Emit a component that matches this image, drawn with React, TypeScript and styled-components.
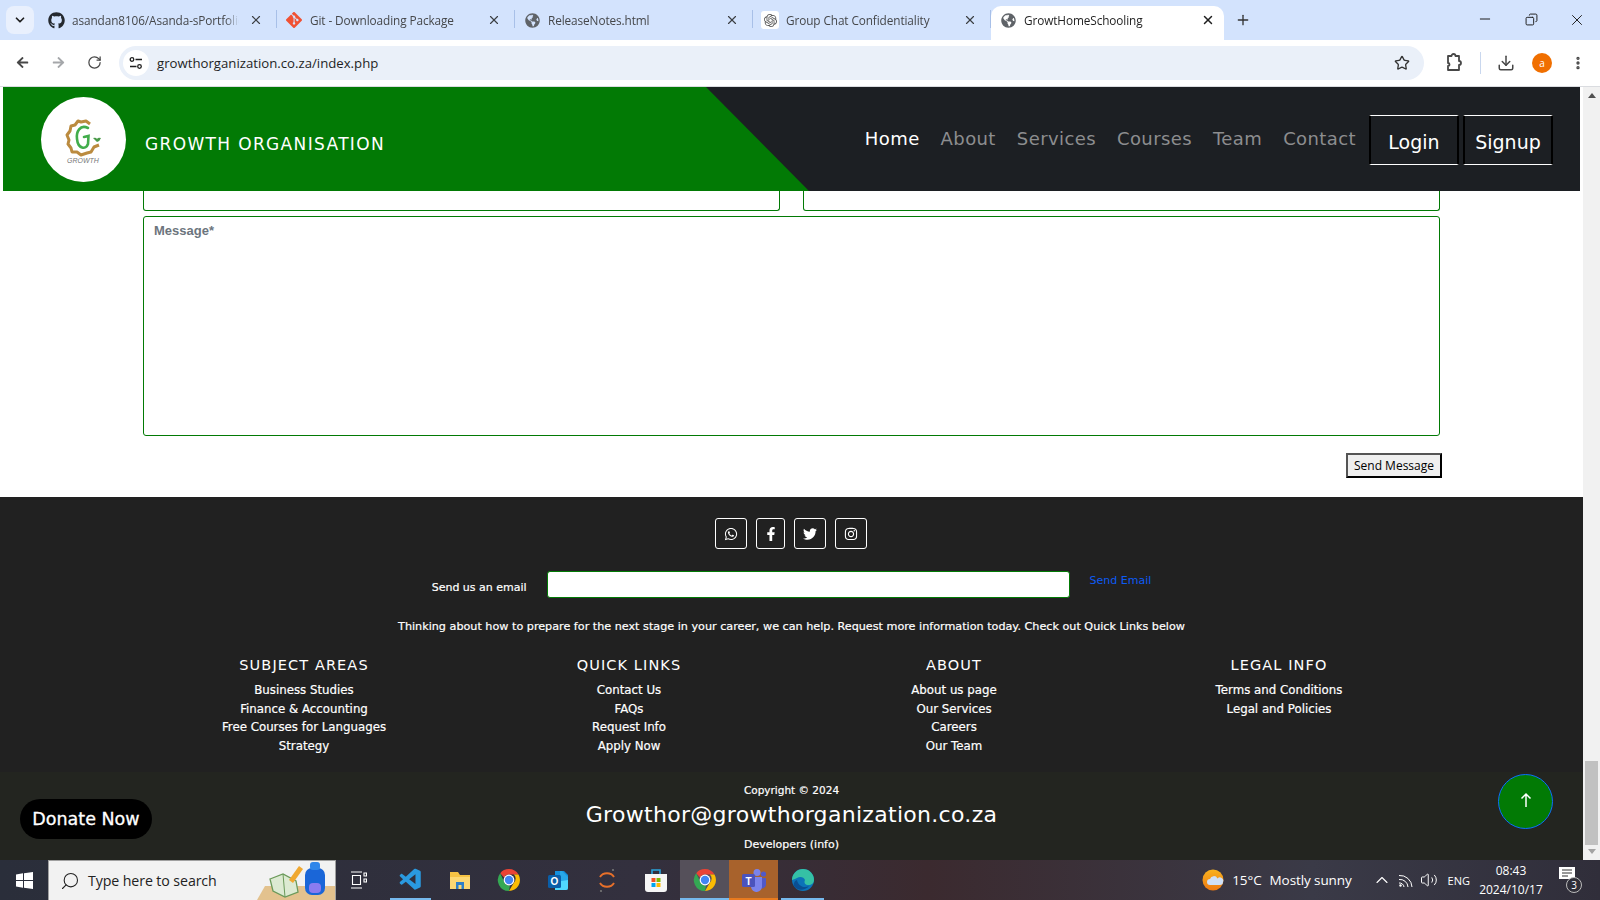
import React, { FC } from 'react';
import styled, { createGlobalStyle } from 'styled-components';
import {
  FaArrowLeft,
  FaArrowRight,
  FaFacebookF,
  FaGithub,
  FaGlobeAmericas,
  FaInstagram,
  FaTwitter,
  FaWhatsapp,
} from 'react-icons/fa';
import { SiGit, SiOpenai } from 'react-icons/si';
import { VscVscode } from 'react-icons/vsc';
import {
  Download,
  EllipsisVertical,
  Minus,
  Plus,
  RotateCw,
  Search,
  Star,
  X,
  ChevronDown,
  ChevronUp,
  Copy,
  Volume2,
} from 'lucide-react';

const siteFont = `'DejaVu Sans', sans-serif`;
const chromeFont = `'Open Sans', 'Noto Sans', sans-serif`;
const green = '#027a05';

const GlobalStyle = createGlobalStyle`
  html, body { margin: 0; padding: 0; height: 100%; overflow: hidden; background: #fff; }
  * { box-sizing: border-box; }
`;

const Screen = styled.div`
  display: flex;
  flex-direction: column;
  width: 1600px;
  height: 900px;
  overflow: hidden;
`;

/* browser chrome */
const TabStrip = styled.div`
  display: flex;
  align-items: flex-end;
  height: 40px;
  flex: none;
  padding-left: 6px;
  background: #d3e3fd;
  font-family: ${chromeFont};
`;

const TabMenu = styled.div`
  display: flex;
  align-items: center;
  justify-content: center;
  width: 28px;
  height: 28px;
  margin: 0 5px 6px 0;
  border-radius: 8px;
  background: #e9f0fd;
  color: #1f1f1f;
`;

const Tab = styled.div<{ $active?: boolean }>`
  position: relative;
  display: flex;
  align-items: center;
  width: ${({ $active }) => ($active ? 233 : 238)}px;
  height: 34px;
  padding: 0 ${({ $active }) => ($active ? 9 : 14)}px 6px 8px;
  border-radius: 10px 10px 0 0;
  background: ${({ $active }) => ($active ? '#fff' : 'transparent')};
  color: ${({ $active }) => ($active ? '#1f1f1f' : '#45474a')};
  &::after {
    content: '';
    display: ${({ $active }) => ($active ? 'none' : 'block')};
    position: absolute;
    right: 0;
    top: 4px;
    height: 18px;
    width: 1px;
    background: #a8c0e8;
  }
`;

const Favicon = styled.span<{ $tile?: boolean }>`
  display: flex;
  align-items: center;
  justify-content: center;
  flex: none;
  width: 18px;
  height: 18px;
  margin-right: 7px;
  border-radius: 3px;
  background: ${({ $tile }) => ($tile ? '#fff' : 'transparent')};
`;

const TabTitle = styled.span`
  flex: 1;
  margin-right: 10px;
  overflow: hidden;
  white-space: nowrap;
  font-size: 11.8px;
  letter-spacing: -0.1px;
  mask-image: linear-gradient(90deg, #000 92%, transparent);
`;

const TabClose = styled.span`
  display: flex;
  flex: none;
  color: #3c3f43;
`;

const NewTab = styled.div`
  display: flex;
  margin: 0 0 12px 11px;
  color: #333;
`;

const WindowButtons = styled.div`
  display: flex;
  margin-left: auto;
  align-self: flex-start;
  padding-top: 11px;
  color: #1f1f1f;
`;

const WindowButton = styled.span`
  display: flex;
  justify-content: center;
  width: 46px;
`;

const RestoreIcon = styled(Copy)`
  margin-top: 2px;
  transform: scaleX(-1);
`;

const Toolbar = styled.div`
  display: flex;
  align-items: center;
  flex: none;
  height: 47px;
  padding: 0 0 1px 13px;
  border-bottom: 1px solid #dadce0;
  border-radius: 8px 8px 0 0;
  background: #fff;
  font-family: ${chromeFont};
  color: #474747;
`;

const NavIcon = styled.span<{ $dim?: boolean }>`
  display: flex;
  justify-content: center;
  width: 18px;
  margin-right: 18px;
  color: ${({ $dim }) => ($dim ? '#a5a7aa' : '#474747')};
`;

const Omnibox = styled.div`
  display: flex;
  align-items: center;
  width: 1305px;
  height: 34px;
  margin-left: -2px;
  padding: 0 14px 0 4px;
  border-radius: 17px;
  background: #eaf0f9;
`;

const SiteInfo = styled.span`
  display: flex;
  align-items: center;
  justify-content: center;
  width: 26px;
  height: 26px;
  margin-right: 8px;
  border-radius: 50%;
  background: #fff;
  color: #1f1f1f;
`;

const Url = styled.span`
  flex: 1;
  font-size: 13.2px;
  color: #1f1f1f;
`;

const ToolActions = styled.div`
  display: flex;
  align-items: center;
  margin-left: 20px;
`;

const ToolDivider = styled.span`
  width: 1px;
  height: 22px;
  margin: 0 16px;
  background: #c9d7ee;
`;

const Avatar = styled.span`
  display: flex;
  align-items: center;
  justify-content: center;
  width: 20px;
  height: 20px;
  margin: 0 18px 0 17px;
  border-radius: 50%;
  background: #f06f00;
  color: #fff;
  font-size: 10px;
`;

/* page */
const Viewport = styled.div`
  display: flex;
  flex: 1;
  min-height: 0;
`;

const Page = styled.div`
  position: relative;
  display: flex;
  flex-direction: column;
  flex: 1;
  min-width: 0;
  background: #fff;
  font-family: ${siteFont};
`;

const Header = styled.header`
  display: flex;
  flex: none;
  height: 104px;
  margin: 0 3px;
  background: #1c1f23;
`;

const Brand = styled.div`
  display: flex;
  align-items: center;
  flex: none;
  width: 806px;
  padding-left: 38px;
  background: ${green};
  clip-path: polygon(0 0, 703px 0, 100% 100%, 0 100%);
`;

const LogoDisc = styled.div`
  display: flex;
  align-items: center;
  justify-content: center;
  width: 85px;
  height: 85px;
  padding-top: 4px;
  border-radius: 50%;
  background: #fff;
`;

const BrandName = styled.span`
  margin: 10px 0 0 19px;
  color: #fff;
  font-size: 17px;
  letter-spacing: 1.35px;
  white-space: nowrap;
`;

const Menu = styled.nav`
  display: flex;
  align-items: center;
  flex: 1;
  justify-content: flex-end;
  padding-right: 27px;
`;

const MenuLink = styled.a<{ $current?: boolean }>`
  margin: -2px 21px 0 0;
  color: ${({ $current }) => ($current ? '#fff' : '#8c8d8f')};
  font-size: 18px;
  letter-spacing: 0.4px;
`;

const AuthGroup = styled.div`
  display: flex;
  gap: 4px;
  margin: 2px 0 0 -8px;
`;

const AuthButton = styled.a`
  display: flex;
  align-items: center;
  justify-content: center;
  width: 90px;
  height: 50px;
  padding-top: 4px;
  border: solid #fff;
  border-width: 1px 0;
  border-left: 2px solid #000;
  border-right: 2px solid #000;
  color: #fff;
  font-size: 19px;
`;

const ContactForm = styled.section`
  display: flex;
  flex-direction: column;
  flex: none;
  height: 306px;
  padding: 0 143px;
`;

const InputRow = styled.div`
  display: grid;
  grid-template-columns: 637px 637px;
  justify-content: space-between;
  flex: none;
`;

const ClippedInput = styled.div`
  height: 20px;
  border: 1px solid ${green};
  border-top: none;
  border-radius: 0 0 3px 3px;
`;

const MessageBox = styled.div`
  flex: none;
  height: 220px;
  margin-top: 5px;
  padding: 6px 10px;
  border: 1px solid ${green};
  border-radius: 3px;
  color: #6c757d;
  font: bold 13px 'Liberation Sans', sans-serif;
`;

const FormActions = styled.div`
  display: flex;
  justify-content: flex-end;
  margin: 17px -2px 0 0;
`;

const SendButton = styled.button`
  width: 96px;
  height: 25px;
  padding: 0;
  border: 2px solid;
  border-color: #555 #000 #000 #555;
  background: #efefef;
  color: #000;
  font: 12px ${chromeFont};
`;

const Footer = styled.footer`
  display: flex;
  flex-direction: column;
  flex: 1;
  min-height: 0;
  background: #212121;
  color: #fff;
  -webkit-text-stroke: 0.2px #fff;
`;

const FooterMain = styled.div`
  display: flex;
  flex-direction: column;
  align-items: center;
  flex: none;
  height: 275px;
  padding-top: 21px;
`;

const Socials = styled.div`
  display: flex;
  gap: 9px;
  margin-right: 1px;
`;

const SocialLink = styled.a<{ $wide?: boolean }>`
  display: flex;
  align-items: center;
  justify-content: center;
  width: ${({ $wide }) => ($wide ? 32 : 29)}px;
  height: 31px;
  border: 1px solid #fff;
  border-radius: 3px;
  color: #fff;
  font-size: 14px;
`;

const EmailRow = styled.div`
  display: flex;
  align-items: flex-start;
  height: 27px;
  margin-top: 22px;
  font-size: 11px;
`;

const EmailLabel = styled.label`
  margin: 10px 20px 0 0;
`;

const EmailInput = styled.div`
  width: 523px;
  height: 27px;
  border: 1px solid ${green};
  border-radius: 3px;
  background: #fff;
`;

const SendEmail = styled.a`
  margin: 3px 0 0 20px;
  color: #0d5bf5;
  -webkit-text-stroke: 0;
`;

const Blurb = styled.p`
  margin: 22px 0 0;
  font-size: 11.2px;
  white-space: nowrap;
`;

const LinkGrid = styled.div`
  display: grid;
  grid-template-columns: repeat(4, 325px);
  margin: 24px 0 0;
  text-align: center;
`;

const LinkColumn = styled.div`
  display: flex;
  flex-direction: column;
  align-items: center;
`;

const ColumnTitle = styled.h5`
  margin: 0 0 8px;
  font-size: 14.5px;
  font-weight: normal;
  letter-spacing: 1.1px;
  line-height: 16px;
  -webkit-text-stroke: 0;
`;

const ColumnLink = styled.a`
  font-size: 11.8px;
  line-height: 18.7px;
  white-space: nowrap;
`;

const FooterBottom = styled.div`
  display: flex;
  flex-direction: column;
  align-items: center;
  flex: 1;
  padding-top: 11px;
  background: #232520;
`;

const Copyright = styled.span`
  font-size: 10.5px;
  line-height: 14px;
`;

const ContactMail = styled.span`
  margin-top: 4px;
  font-size: 22px;
  line-height: 27px;
  letter-spacing: 0.3px;
  -webkit-text-stroke: 0;
`;

const Developers = styled.span`
  margin-top: 10px;
  font-size: 11px;
  line-height: 14px;
`;

const DonateButton = styled.a`
  position: absolute;
  left: 20px;
  bottom: 21px;
  display: flex;
  align-items: center;
  justify-content: center;
  width: 132px;
  height: 40px;
  border-radius: 20px;
  background: #000;
  color: #fff;
  font-size: 17.5px;
  -webkit-text-stroke: 0.3px #fff;
`;

const UpButton = styled.a`
  position: absolute;
  right: 30px;
  bottom: 31px;
  display: flex;
  align-items: center;
  justify-content: center;
  width: 55px;
  height: 55px;
  padding-bottom: 3px;
  border: 1px solid #0d6efd;
  border-radius: 50%;
  background: ${green};
  color: #fff;
`;

const Scrollbar = styled.div`
  display: flex;
  flex-direction: column;
  align-items: center;
  flex: none;
  width: 17px;
  padding: 6px 0;
  background: #f1f1f1;
`;

const ScrollThumb = styled.div`
  width: 13px;
  height: 84px;
  margin-top: auto;
  margin-bottom: 4px;
  background: #c1c1c1;
`;

const ScrollArrow = styled.span<{ $down?: boolean }>`
  width: 0;
  height: 0;
  border-left: 4px solid transparent;
  border-right: 4px solid transparent;
  ${({ $down }) =>
    $down ? 'border-top: 5px solid #a3a3a3;' : 'border-bottom: 5px solid #505050;'}
`;

/* windows taskbar */
const Taskbar = styled.div`
  display: flex;
  align-items: center;
  flex: none;
  height: 40px;
  background: linear-gradient(90deg, #2a2e3a 0%, #33303e 40%, #3b2a2f 58%, #3a3a47 82%, #302e3a 100%);
  color: #fff;
  font-family: ${chromeFont};
`;

const StartButton = styled.div`
  display: flex;
  align-items: center;
  justify-content: center;
  width: 48px;
  height: 40px;
`;

const SearchBox = styled.div`
  position: relative;
  display: flex;
  align-items: center;
  width: 288px;
  height: 40px;
  padding-left: 11px;
  overflow: hidden;
  border: 1px solid #a0a0a0;
  border-bottom: none;
  background: #f2f2f2;
  color: #222;
  font-size: 14.2px;
`;

const SearchGlass = styled(Search)`
  transform: scaleX(-1);
`;

const SearchText = styled.span`
  margin-left: 8px;
  letter-spacing: -0.1px;
`;

const SearchArt = styled.svg`
  position: absolute;
  right: 0;
  bottom: 0;
`;

const TaskView = styled.div`
  display: flex;
  align-items: center;
  justify-content: center;
  width: 50px;
  padding-right: 4px;
`;

const TaskIcon = styled.div<{ $bg?: string; $line?: string; $inset?: number }>`
  position: relative;
  display: flex;
  align-items: center;
  justify-content: center;
  width: 49px;
  height: 40px;
  background: ${({ $bg }) => $bg || 'transparent'};
  &::after {
    content: '';
    position: absolute;
    left: ${({ $inset }) => $inset || 0}px;
    right: ${({ $inset }) => $inset || 0}px;
    bottom: 0;
    height: 2px;
    background: ${({ $line }) => $line || 'transparent'};
  }
`;

const Tray = styled.div`
  display: flex;
  align-items: center;
  margin-left: auto;
  height: 40px;
  font-size: 13.5px;
`;

const Weather = styled.span`
  display: flex;
  align-items: center;
  margin-right: 20px;
`;

const WeatherText = styled.span`
  margin-left: 8px;
  letter-spacing: -0.1px;
`;

const TrayIcon = styled.span`
  display: flex;
  margin-right: 6px;
`;

const Lang = styled.span`
  margin: 0 8px 0 4px;
  font-size: 11px;
`;

const Clock = styled.div`
  display: flex;
  flex-direction: column;
  align-items: center;
  width: 66px;
  margin-right: 15px;
  font-size: 12px;
  line-height: 19px;
`;

const Notify = styled.span`
  position: relative;
  display: flex;
  width: 23px;
  height: 26px;
  margin-right: 18px;
`;

const NotifyBadge = styled.span`
  position: absolute;
  left: 7px;
  top: 10px;
  width: 16px;
  height: 16px;
  border: 1px solid #bbb;
  border-radius: 50%;
  background: #2f2e38;
  font-size: 10px;
  line-height: 14px;
  text-align: center;
`;

const GrowthLogo: FC = () => (
  <svg width="38" height="46" viewBox="0 0 38 46">
    <path
      d="M25 6 L21 3 L16 4 L13 3 L10 7 L6 8 L5 13 L2 17 L4 22 L3 26 L6 30 L7 34 L12 34 L16 37 L22 35 L26 34 L29 29 L34 27"
      fill="none"
      stroke="#bb8b3f"
      strokeWidth="3"
      strokeLinejoin="round"
    />
    <path
      d="M23 10 C15 6 11 14 12 21 C13 31 21 32 23 26 L23.500 18 L19 19"
      fill="none"
      stroke="#42ad4b"
      strokeWidth="2.6"
      strokeLinecap="round"
    />
    <path d="M32 24 q-3 -3 -4 -4 q3 -1 4 1 q1 -2 4 -1 q-1 3 -4 4" fill="#4a9a4a" />
    <text x="18" y="45" textAnchor="middle" fontSize="7" fontStyle="italic" fill="#777" fontFamily="Liberation Sans, sans-serif">
      GROWTH
    </text>
  </svg>
);

const SiteInfoIcon: FC = () => (
  <svg width="14" height="14" viewBox="0 0 14 14" fill="none" stroke="currentColor" strokeWidth="1.3">
    <circle cx="3" cy="3.500" r="1.800" />
    <path d="M6.500 3.500H13M1 10.500h6.500" />
    <circle cx="10.500" cy="10.500" r="1.800" />
  </svg>
);

const ExtensionIcon: FC = () => (
  <svg width="20" height="20" viewBox="0 0 20 20" fill="none" stroke="currentColor" strokeWidth="1.8" strokeLinejoin="round">
    <path d="M4 3h3.500a2 2 0 0 1 4 0H15v5a2 2 0 0 1 0 4v5H4v-4a1.500 1.500 0 0 0 0-3V3z" />
  </svg>
);

const WifiIcon: FC = () => (
  <svg width="16" height="16" viewBox="0 0 16 16" fill="none" stroke="#fff" strokeWidth="1">
    <path d="M1 7.500A8 8 0 0 1 10 15M1 3.500A12 12 0 0 1 14 15M1 11a4.500 4.500 0 0 1 5 4" />
    <circle cx="2.500" cy="13.500" r="1.200" fill="#fff" stroke="none" />
  </svg>
);

const ChromeMark: FC = () => (
  <svg width="24" height="24" viewBox="0 0 24 24">
    <path d="M12 1a11 11 0 0 1 9.500 5.500H12A5.500 5.500 0 0 0 7 9.500L3.200 5.200A11 11 0 0 1 12 1z" fill="#ea4335" />
    <path d="M21.500 6.500A11 11 0 0 1 12 23l4.800-8.300a5.500 5.500 0 0 0 0-8.200z" fill="#fbbc04" />
    <path d="M12 23A11 11 0 0 1 3.200 5.200L7.600 14.700a5.500 5.500 0 0 0 5.400 2.800z" fill="#34a853" />
    <circle cx="12" cy="12" r="5.400" fill="#fff" />
    <circle cx="12" cy="12" r="4.200" fill="#4285f4" />
  </svg>
);

const Explorer: FC = () => (
  <svg width="24" height="24" viewBox="0 0 24 24">
    <path d="M2 4h8l2 3h10v14H2z" fill="#f5c244" />
    <path d="M2 9h20v12H2z" fill="#fcd873" />
    <rect x="8" y="14" width="8" height="7" fill="#2f80c8" />
    <rect x="10.500" y="17" width="3" height="4" fill="#fcd873" />
  </svg>
);

const Outlook: FC = () => (
  <svg width="24" height="24" viewBox="0 0 24 24">
    <path d="M9 3h9l4 4v13a2 2 0 0 1-2 2H9z" fill="#1490df" />
    <path d="M16 3l6 6v5h-8V3z" fill="#28a8ea" />
    <path d="M9 14l13-2v8a2 2 0 0 1-2 2H9z" fill="#50d9ff" />
    <rect x="2" y="7" width="13" height="13" rx="1.500" fill="#0a5ea8" />
    <text x="8.500" y="17" textAnchor="middle" fontSize="10" fontWeight="bold" fill="#fff" fontFamily="Liberation Sans, sans-serif">
      O
    </text>
  </svg>
);

const Jupyter: FC = () => (
  <svg width="22" height="26" viewBox="0 0 22 26">
    <path d="M4 10c3-5 11-5 14 0" fill="none" stroke="#e8702a" strokeWidth="2" />
    <path d="M4 16c3 5 11 5 14 0" fill="none" stroke="#e8702a" strokeWidth="2" />
    <circle cx="17" cy="3" r="1.100" fill="#777" />
    <circle cx="5" cy="24" r="1.100" fill="#777" />
  </svg>
);

const Store: FC = () => (
  <svg width="24" height="26" viewBox="0 0 24 26">
    <path d="M8 7V3h8v4" fill="none" stroke="#2aa4dc" strokeWidth="1.600" />
    <path d="M1 7h22v15a3 3 0 0 1-3 3H4a3 3 0 0 1-3-3z" fill="#f6f6f6" />
    <rect x="7.500" y="11" width="4" height="4" fill="#f25022" />
    <rect x="12.500" y="11" width="4" height="4" fill="#7fba00" />
    <rect x="7.500" y="16" width="4" height="4" fill="#00a4ef" />
    <rect x="12.500" y="16" width="4" height="4" fill="#ffb900" />
  </svg>
);

const Teams: FC = () => (
  <svg width="26" height="24" viewBox="0 0 26 24">
    <circle cx="16" cy="4.500" r="3.500" fill="#7b83eb" />
    <circle cx="22.500" cy="6" r="2.600" fill="#5059c9" />
    <path d="M18 10h7v7a4 4 0 0 1-7 2z" fill="#5059c9" />
    <path d="M9 9h12v9a5.500 5.500 0 0 1-11 1z" fill="#7b83eb" />
    <rect x="1" y="6" width="13" height="13" rx="1.500" fill="#4b53bc" />
    <text x="7.500" y="16.500" textAnchor="middle" fontSize="10" fontWeight="bold" fill="#fff" fontFamily="Liberation Sans, sans-serif">
      T
    </text>
  </svg>
);

const Edge: FC = () => (
  <svg width="24" height="24" viewBox="0 0 24 24">
    <circle cx="12" cy="12" r="11" fill="#0c73b8" />
    <path d="M1 12A11 11 0 0 1 23 12c0 3-2.500 5-5.500 5S12.500 15 14 12c-1-3-5-4-8-2-3 1.500-5 2-5 2z" fill="#35c1a5" />
    <path d="M6 12c1 5 6 9 12 6-4 5-12 5-15 0-1-2 1-6 3-6z" fill="#0a4f93" />
  </svg>
);

const WeatherIcon: FC = () => (
  <svg width="22" height="24" viewBox="0 0 22 24">
    <defs>
      <linearGradient id="sun" x1="0" y1="0" x2="0" y2="1">
        <stop offset="0" stopColor="#f9b21e" />
        <stop offset="1" stopColor="#ee7a12" />
      </linearGradient>
    </defs>
    <circle cx="11" cy="12" r="10.500" fill="url(#sun)" />
    <path d="M8 17a3 3 0 0 1 0-6 4 4 0 0 1 7.500-.5A3.300 3.300 0 0 1 21 14a3 3 0 0 1-3 3z" fill="#cfe0f7" />
  </svg>
);

const Tabs = [
  { title: 'asandan8106/Asanda-sPortfolio', icon: <FaGithub size={17} color="#24292f" /> },
  { title: 'Git - Downloading Package', icon: <SiGit size={16} color="#f05133" /> },
  { title: 'ReleaseNotes.html', icon: <FaGlobeAmericas size={15} color="#5f6368" /> },
  { title: 'Group Chat Confidentiality', icon: <SiOpenai size={13} color="#555" />, tile: true },
];

const Columns = [
  { title: 'SUBJECT AREAS', links: ['Business Studies', 'Finance & Accounting', 'Free Courses for Languages', 'Strategy'] },
  { title: 'QUICK LINKS', links: ['Contact Us', 'FAQs', 'Request Info', 'Apply Now'] },
  { title: 'ABOUT', links: ['About us page', 'Our Services', 'Careers', 'Our Team'] },
  { title: 'LEGAL INFO', links: ['Terms and Conditions', 'Legal and Policies'] },
];

const App: FC = () => {
  return (
    <Screen>
      <GlobalStyle />
      <TabStrip>
        <TabMenu>
          <ChevronDown size={14} strokeWidth={3} />
        </TabMenu>
        {Tabs.map((tab) => (
          <Tab key={tab.title}>
            <Favicon $tile={tab.tile}>{tab.icon}</Favicon>
            <TabTitle>{tab.title}</TabTitle>
            <TabClose>
              <X size={14} strokeWidth={2} />
            </TabClose>
          </Tab>
        ))}
        <Tab $active>
          <Favicon>
            <FaGlobeAmericas size={15} color="#5f6368" />
          </Favicon>
          <TabTitle>GrowtHomeSchooling</TabTitle>
          <TabClose>
            <X size={14} strokeWidth={2.5} color="#1f1f1f" />
          </TabClose>
        </Tab>
        <NewTab>
          <Plus size={16} strokeWidth={2} />
        </NewTab>
        <WindowButtons>
          <WindowButton>
            <Minus size={16} strokeWidth={1.5} />
          </WindowButton>
          <WindowButton>
            <RestoreIcon size={13} strokeWidth={1.8} />
          </WindowButton>
          <WindowButton>
            <X size={18} strokeWidth={1.3} />
          </WindowButton>
        </WindowButtons>
      </TabStrip>
      <Toolbar>
        <NavIcon>
          <FaArrowLeft size={13} />
        </NavIcon>
        <NavIcon $dim>
          <FaArrowRight size={13} />
        </NavIcon>
        <NavIcon>
          <RotateCw size={15} strokeWidth={2} />
        </NavIcon>
        <Omnibox>
          <SiteInfo>
            <SiteInfoIcon />
          </SiteInfo>
          <Url>growthorganization.co.za/index.php</Url>
          <Star size={16} strokeWidth={2} color="#333" />
        </Omnibox>
        <ToolActions>
          <ExtensionIcon />
          <ToolDivider />
          <Download size={18} strokeWidth={2} />
          <Avatar>a</Avatar>
          <EllipsisVertical size={16} strokeWidth={3} />
        </ToolActions>
      </Toolbar>
      <Viewport>
        <Page>
          <Header>
            <Brand>
              <LogoDisc>
                <GrowthLogo />
              </LogoDisc>
              <BrandName>GROWTH ORGANISATION</BrandName>
            </Brand>
            <Menu>
              <MenuLink $current>Home</MenuLink>
              <MenuLink>About</MenuLink>
              <MenuLink>Services</MenuLink>
              <MenuLink>Courses</MenuLink>
              <MenuLink>Team</MenuLink>
              <MenuLink>Contact</MenuLink>
              <AuthGroup>
                <AuthButton>Login</AuthButton>
                <AuthButton>Signup</AuthButton>
              </AuthGroup>
            </Menu>
          </Header>
          <ContactForm>
            <InputRow>
              <ClippedInput />
              <ClippedInput />
            </InputRow>
            <MessageBox>Message*</MessageBox>
            <FormActions>
              <SendButton>Send Message</SendButton>
            </FormActions>
          </ContactForm>
          <Footer>
            <FooterMain>
              <Socials>
                <SocialLink $wide>
                  <FaWhatsapp />
                </SocialLink>
                <SocialLink>
                  <FaFacebookF />
                </SocialLink>
                <SocialLink $wide>
                  <FaTwitter />
                </SocialLink>
                <SocialLink $wide>
                  <FaInstagram />
                </SocialLink>
              </Socials>
              <EmailRow>
                <EmailLabel>Send us an email</EmailLabel>
                <EmailInput />
                <SendEmail>Send Email</SendEmail>
              </EmailRow>
              <Blurb>
                Thinking about how to prepare for the next stage in your career, we can help. Request more information
                today. Check out Quick Links below
              </Blurb>
              <LinkGrid>
                {Columns.map((column) => (
                  <LinkColumn key={column.title}>
                    <ColumnTitle>{column.title}</ColumnTitle>
                    {column.links.map((link) => (
                      <ColumnLink key={link}>{link}</ColumnLink>
                    ))}
                  </LinkColumn>
                ))}
              </LinkGrid>
            </FooterMain>
            <FooterBottom>
              <Copyright>Copyright © 2024</Copyright>
              <ContactMail>Growthor@growthorganization.co.za</ContactMail>
              <Developers>Developers (info)</Developers>
            </FooterBottom>
          </Footer>
          <DonateButton>Donate Now</DonateButton>
          <UpButton>
            <svg width="12" height="16" viewBox="0 0 12 16" fill="none">
              <path d="M6 15V2M1.500 6.500L6 2l4.500 4.500" stroke="#fff" strokeWidth="1.500" />
            </svg>
          </UpButton>
        </Page>
        <Scrollbar>
          <ScrollArrow />
          <ScrollThumb />
          <ScrollArrow $down />
        </Scrollbar>
      </Viewport>
      <Taskbar>
        <StartButton>
          <svg width="17" height="17" viewBox="0 0 17 17" fill="#fff">
            <path d="M0 2.400 7 1.300V8H0zM8 1.200 17 0V8H8zM0 9h7v6.700L0 14.600zM8 9h9v8l-9-1.200z" />
          </svg>
        </StartButton>
        <SearchBox>
          <SearchGlass size={20} strokeWidth={1.3} />
          <SearchText>Type here to search</SearchText>
          <SearchArt width="82" height="40" viewBox="0 0 82 40">
            <path d="M4 40 L12 26 H82 V40z" fill="#e3c28e" />
            <path d="M17 19 L30 14 L43 21 L45 32 L32 37 L20 31z" fill="#dcead2" stroke="#6b9a5a" strokeWidth="1.300" />
            <path d="M30 14 L32 37" stroke="#6b9a5a" strokeWidth="1" />
            <path d="M36 20 L46 6 L50 9 L40 23z" fill="#f0a830" />
            <rect x="52" y="8" width="20" height="27" rx="7" fill="#1a66d8" />
            <rect x="57" y="2" width="10" height="8" rx="3" fill="#2f86ea" />
            <rect x="56" y="23" width="12" height="10" rx="4" fill="#8b7cf0" />
          </SearchArt>
        </SearchBox>
        <TaskView>
          <svg width="16" height="18" viewBox="0 0 16 18" fill="none" stroke="#fff" strokeWidth="1.100">
            <path d="M0 1h11M0 17h11M1.500 4.500h8v9h-8z" />
            <path d="M13 2h2.500v3H13zM13 8h2.500v3H13z" />
          </svg>
        </TaskView>
        <TaskIcon $line="#76b9ed" $inset={4}>
          <VscVscode size={26} color="#2a9ae0" />
        </TaskIcon>
        <TaskIcon>
          <Explorer />
        </TaskIcon>
        <TaskIcon>
          <ChromeMark />
        </TaskIcon>
        <TaskIcon>
          <Outlook />
        </TaskIcon>
        <TaskIcon>
          <Jupyter />
        </TaskIcon>
        <TaskIcon>
          <Store />
        </TaskIcon>
        <TaskIcon $bg="#55505a" $line="#76b9ed">
          <ChromeMark />
        </TaskIcon>
        <TaskIcon $bg="#a8622c" $line="#e87a1e">
          <Teams />
        </TaskIcon>
        <TaskIcon $line="#76b9ed" $inset={3}>
          <Edge />
        </TaskIcon>
        <Tray>
          <Weather>
            <WeatherIcon />
            <WeatherText>15°C</WeatherText>
            <WeatherText>Mostly sunny</WeatherText>
          </Weather>
          <TrayIcon>
            <ChevronUp size={20} strokeWidth={1.3} />
          </TrayIcon>
          <TrayIcon>
            <WifiIcon />
          </TrayIcon>
          <TrayIcon>
            <Volume2 size={18} strokeWidth={1.3} />
          </TrayIcon>
          <Lang>ENG</Lang>
          <Clock>
            <span>08:43</span>
            <span>2024/10/17</span>
          </Clock>
          <Notify>
            <svg width="16" height="13" viewBox="0 0 16 13">
              <path d="M0 0h16v12H0z" fill="#fff" />
              <path d="M3 3h10M3 6h10M3 9h6" stroke="#333" strokeWidth="1" />
            </svg>
            <NotifyBadge>3</NotifyBadge>
          </Notify>
        </Tray>
      </Taskbar>
    </Screen>
  );
};

export default App;
